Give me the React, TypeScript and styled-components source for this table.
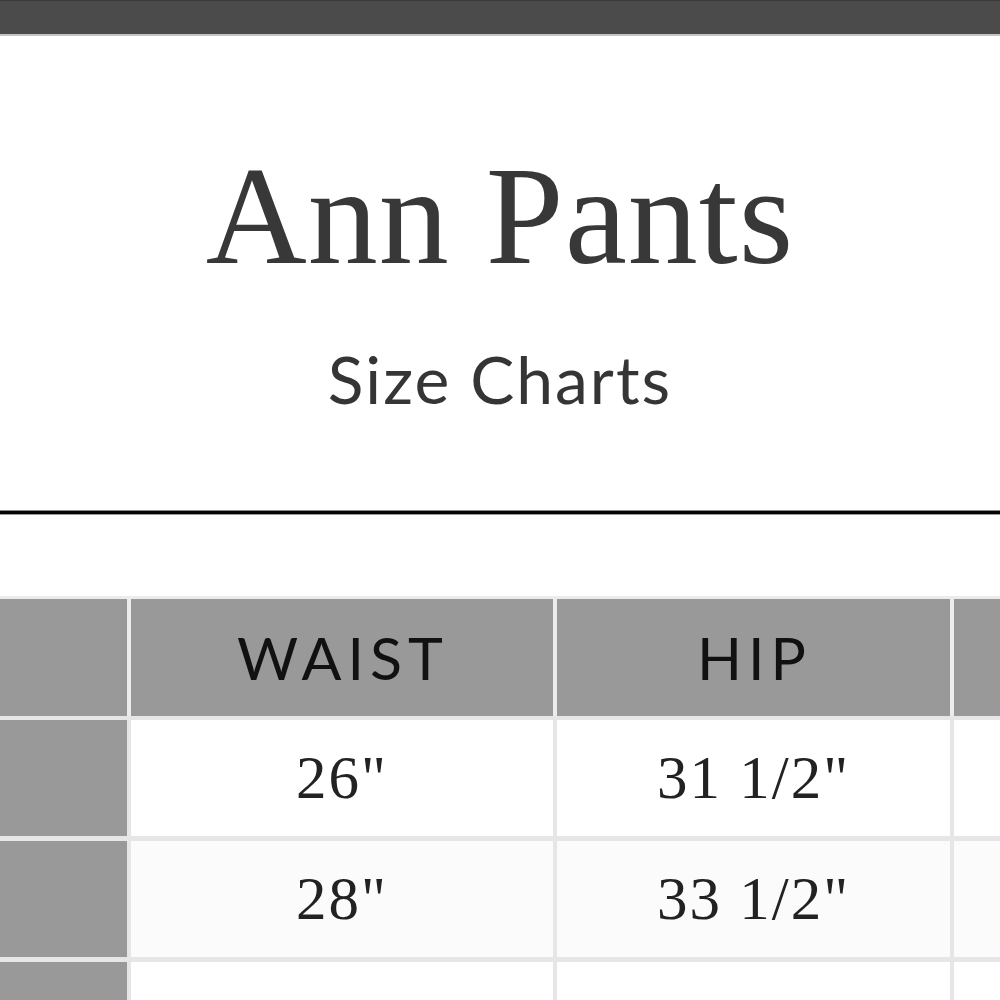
import React from "react";
import styled, { createGlobalStyle } from "styled-components";

const GlobalStyle = createGlobalStyle`
  html, body {
    margin: 0;
    padding: 0;
    background: #ffffff;
  }
  body {
    font-family: "Lato", "Liberation Sans", sans-serif;
    overflow: hidden;
  }
`;

const Page = styled.div`
  width: 1000px;
  height: 1000px;
  overflow: hidden;
  background: #ffffff;
`;

const TopBar = styled.div`
  height: 33px;
  background: #4b4b4b;
  border-top: 1px solid #3a3a3a;
  border-bottom: 2px solid #c4c4c4;
`;

const Heading = styled.header`
  display: flex;
  flex-direction: column;
  align-items: center;
  padding-top: 110px;
`;

const Title = styled.h1`
  margin: 0;
  font-family: "Liberation Serif", "Times New Roman", serif;
  font-weight: 400;
  font-size: 140px;
  line-height: 1;
  color: #383838;
  letter-spacing: 1px;
`;

const Subtitle = styled.h2`
  margin: 60px 0 0;
  font-family: "Lato", "Liberation Sans", sans-serif;
  font-weight: 400;
  font-size: 66px;
  line-height: 1;
  color: #353535;
  letter-spacing: 2px;
`;

const Rule = styled.hr`
  margin: 98px 0 0;
  height: 3px;
  border: none;
  border-top: 1px solid #8a8a8a;
  border-bottom: 1px solid #9a9a9a;
  background: #050505;
`;

const Table = styled.div`
  margin-top: 81px;
  display: flex;
  flex-direction: column;
`;

const Row = styled.div<{ head?: boolean; gap: number }>`
  display: grid;
  grid-template-columns: 127px 422px 393px 220px;
  column-gap: 4px;
  padding-top: ${p => p.gap}px;
  background: ${p => (p.head ? "#ececec" : "#e6e6e9")};
`;

const HeadCell = styled.div`
  height: 117px;
  background: #999999;
  display: flex;
  align-items: center;
  justify-content: center;
  font-family: "Lato", "Liberation Sans", sans-serif;
  font-size: 59px;
  letter-spacing: 6px;
  color: #111111;
  padding-left: 2px;
`;

const SideCell = styled.div`
  background: #999999;
`;

const Cell = styled.div<{ shade?: boolean }>`
  height: 116px;
  background: ${p => (p.shade ? "#fbfbfb" : "#ffffff")};
  display: flex;
  align-items: center;
  justify-content: center;
  font-family: "Liberation Serif", "Times New Roman", serif;
  font-size: 61px;
  letter-spacing: 2px;
  color: #222222;
`;

const rows = [
  { waist: "26\"", hip: "31 1/2\"" },
  { waist: "28\"", hip: "33 1/2\"" },
  { waist: "", hip: "" },
];

export default function App() {
  return (
    <Page>
      <GlobalStyle />
      <TopBar />
      <Heading>
        <Title>Ann Pants</Title>
        <Subtitle>Size Charts</Subtitle>
      </Heading>
      <Rule />
      <Table>
        <Row head gap={3}>
          <HeadCell />
          <HeadCell>WAIST</HeadCell>
          <HeadCell>HIP</HeadCell>
          <HeadCell />
        </Row>
        {rows.map((r, i) => (
          <Row key={i} gap={i === 0 ? 4 : 5}>
            <SideCell />
            <Cell shade={i % 2 === 1}>{r.waist}</Cell>
            <Cell shade={i % 2 === 1}>{r.hip}</Cell>
            <Cell shade={i % 2 === 1} />
          </Row>
        ))}
      </Table>
    </Page>
  );
}
